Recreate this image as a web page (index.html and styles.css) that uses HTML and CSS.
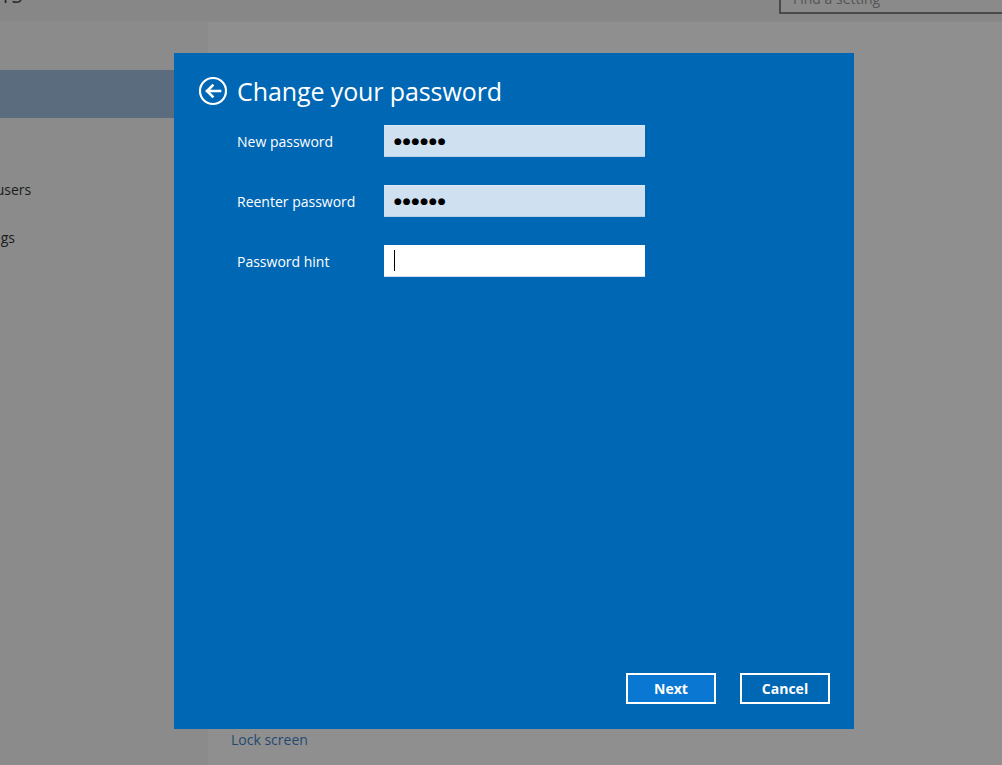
FILE: index.html
```html
<!DOCTYPE html>
<html lang="en">
<head>
<meta charset="utf-8">
<title>Change your password</title>
<link rel="stylesheet" href="styles.css">
</head>
<body>
<div class="window">
  <header class="topbar">
    <h1 class="app-title">ACCOUNTS</h1>
    <div class="search">Find a setting</div>
  </header>
  <div class="main">
    <nav class="nav">
      <div class="nav-item selected">Sign-in options</div>
      <div class="nav-item">Work access</div>
      <div class="nav-item">Family &amp; other users</div>
      <div class="nav-item">Sync your settings</div>
    </nav>
    <section class="content">
      <div class="content-top">Password</div>
      <div class="content-spacer"></div>
      <a class="link">Lock screen</a>
    </section>
  </div>

  <div class="dialog" role="dialog">
    <div class="dialog-head">
      <svg class="back" width="30" height="30" viewBox="0 0 30 30">
        <circle cx="15" cy="15" r="13" fill="none" stroke="#fff" stroke-width="2.2"/>
        <path d="M22 15 H9 M14.5 9.5 L9 15 L14.5 20.5" fill="none" stroke="#fff" stroke-width="2.6" stroke-linecap="square"/>
      </svg>
      <h2 class="dialog-title">Change your password</h2>
    </div>
    <div class="form">
      <label class="label">New password</label>
      <div class="field filled"><span class="dots">●●●●●●</span></div>
      <label class="label">Reenter password</label>
      <div class="field filled"><span class="dots">●●●●●●</span></div>
      <label class="label">Password hint</label>
      <div class="field empty"><span class="caret"></span></div>
    </div>
    <div class="actions">
      <button class="btn primary">Next</button>
      <button class="btn">Cancel</button>
    </div>
  </div>
</div>
</body>
</html>
```
FILE: styles.css
```css
html, body {
  margin: 0;
  padding: 0;
}
body {
  width: 1002px;
  height: 765px;
  overflow: hidden;
  background: #8c8c8c;
  font-family: "Open Sans", "Noto Sans", "DejaVu Sans", sans-serif;
}
.window {
  position: relative;
  width: 1002px;
  height: 765px;
  display: flex;
  flex-direction: column;
}
.topbar {
  height: 21px;
  flex: none;
  background: #878787;
  border-bottom: 1px solid #8a8a8a;
  display: flex;
  justify-content: space-between;
  align-items: flex-start;
}
.app-title {
  margin: -17px 0 0 -86px;
  font-size: 20px;
  font-weight: 400;
  line-height: 26px;
  color: #2a2a2a;
  letter-spacing: 0.5px;
}
.search {
  margin-top: -20px;
  width: 223px;
  height: 34px;
  border: 2px solid #4a4a4a;
  border-right: none;
  box-sizing: border-box;
  padding: 0 12px;
  font-size: 14px;
  line-height: 34px;
  color: #555;
  background: #8a8a8a;
}
.main {
  flex: 1;
  display: flex;
}
.nav {
  width: 208px;
  flex: none;
  background: #8b8b8b;
  padding-top: 48px;
  box-sizing: border-box;
}
.nav-item {
  height: 48px;
  line-height: 48px;
  padding-left: 0;
  text-indent: -103px;
  white-space: nowrap;
  overflow: hidden;
  font-size: 14px;
  color: #1b1b1b;
}
.nav-item.selected {
  background: #5a6c7d;
  color: #fff;
}
.content {
  flex: 1;
  background: #8f8f8f;
  padding-left: 24px;
  display: flex;
  flex-direction: column;
}
.content-top {
  margin-top: 27px;
  font-size: 15px;
  color: #222;
}
.content-spacer {
  flex: 1;
}
.link {
  font-size: 14px;
  color: #244a72;
  margin-bottom: 16px;
  margin-left: -1px;
}

/* dialog */
.dialog {
  position: absolute;
  left: 174px;
  top: 53px;
  width: 680px;
  height: 676px;
  background: #0067b4;
  box-sizing: border-box;
  padding: 23px 24px 25px 24px;
  display: flex;
  flex-direction: column;
  color: #fff;
}
.dialog-head {
  display: flex;
  align-items: center;
  gap: 9px;
  height: 30px;
}
.dialog-title {
  margin: 0;
  font-size: 25px;
  font-weight: 400;
  line-height: 30px;
  color: #fff;
  white-space: nowrap;
  letter-spacing: -0.1px;
}
.form {
  margin-top: 19px;
  margin-left: 39px;
  display: grid;
  grid-template-columns: 147px 261px;
  row-gap: 28px;
  align-items: center;
}
.label {
  font-size: 14px;
  color: #fff;
}
.field {
  height: 32px;
  box-sizing: border-box;
  display: flex;
  align-items: center;
  padding-left: 10px;
}
.field.filled {
  background: #cfe1f1;
  border-top: 1px solid #dbe9f6;
  border-bottom: 1px solid #b7cfe6;
}
.field.empty {
  background: #fff;
  border-bottom: 1px solid #cbdcef;
}
.dots {
  font-family: "DejaVu Sans", sans-serif;
  font-size: 9px;
  letter-spacing: 0.9px;
  color: #000;
  line-height: 1;
}
.caret {
  width: 1px;
  height: 21px;
  background: #000;
}
.actions {
  margin-top: auto;
  display: flex;
  justify-content: flex-end;
  gap: 24px;
}
.btn {
  width: 90px;
  height: 31px;
  border: 2px solid #fff;
  background: transparent;
  color: #fff;
  font-family: inherit;
  font-size: 14px;
  font-weight: 700;
  padding: 0;
}
.btn.primary {
  background: #0a78d3;
}
```
